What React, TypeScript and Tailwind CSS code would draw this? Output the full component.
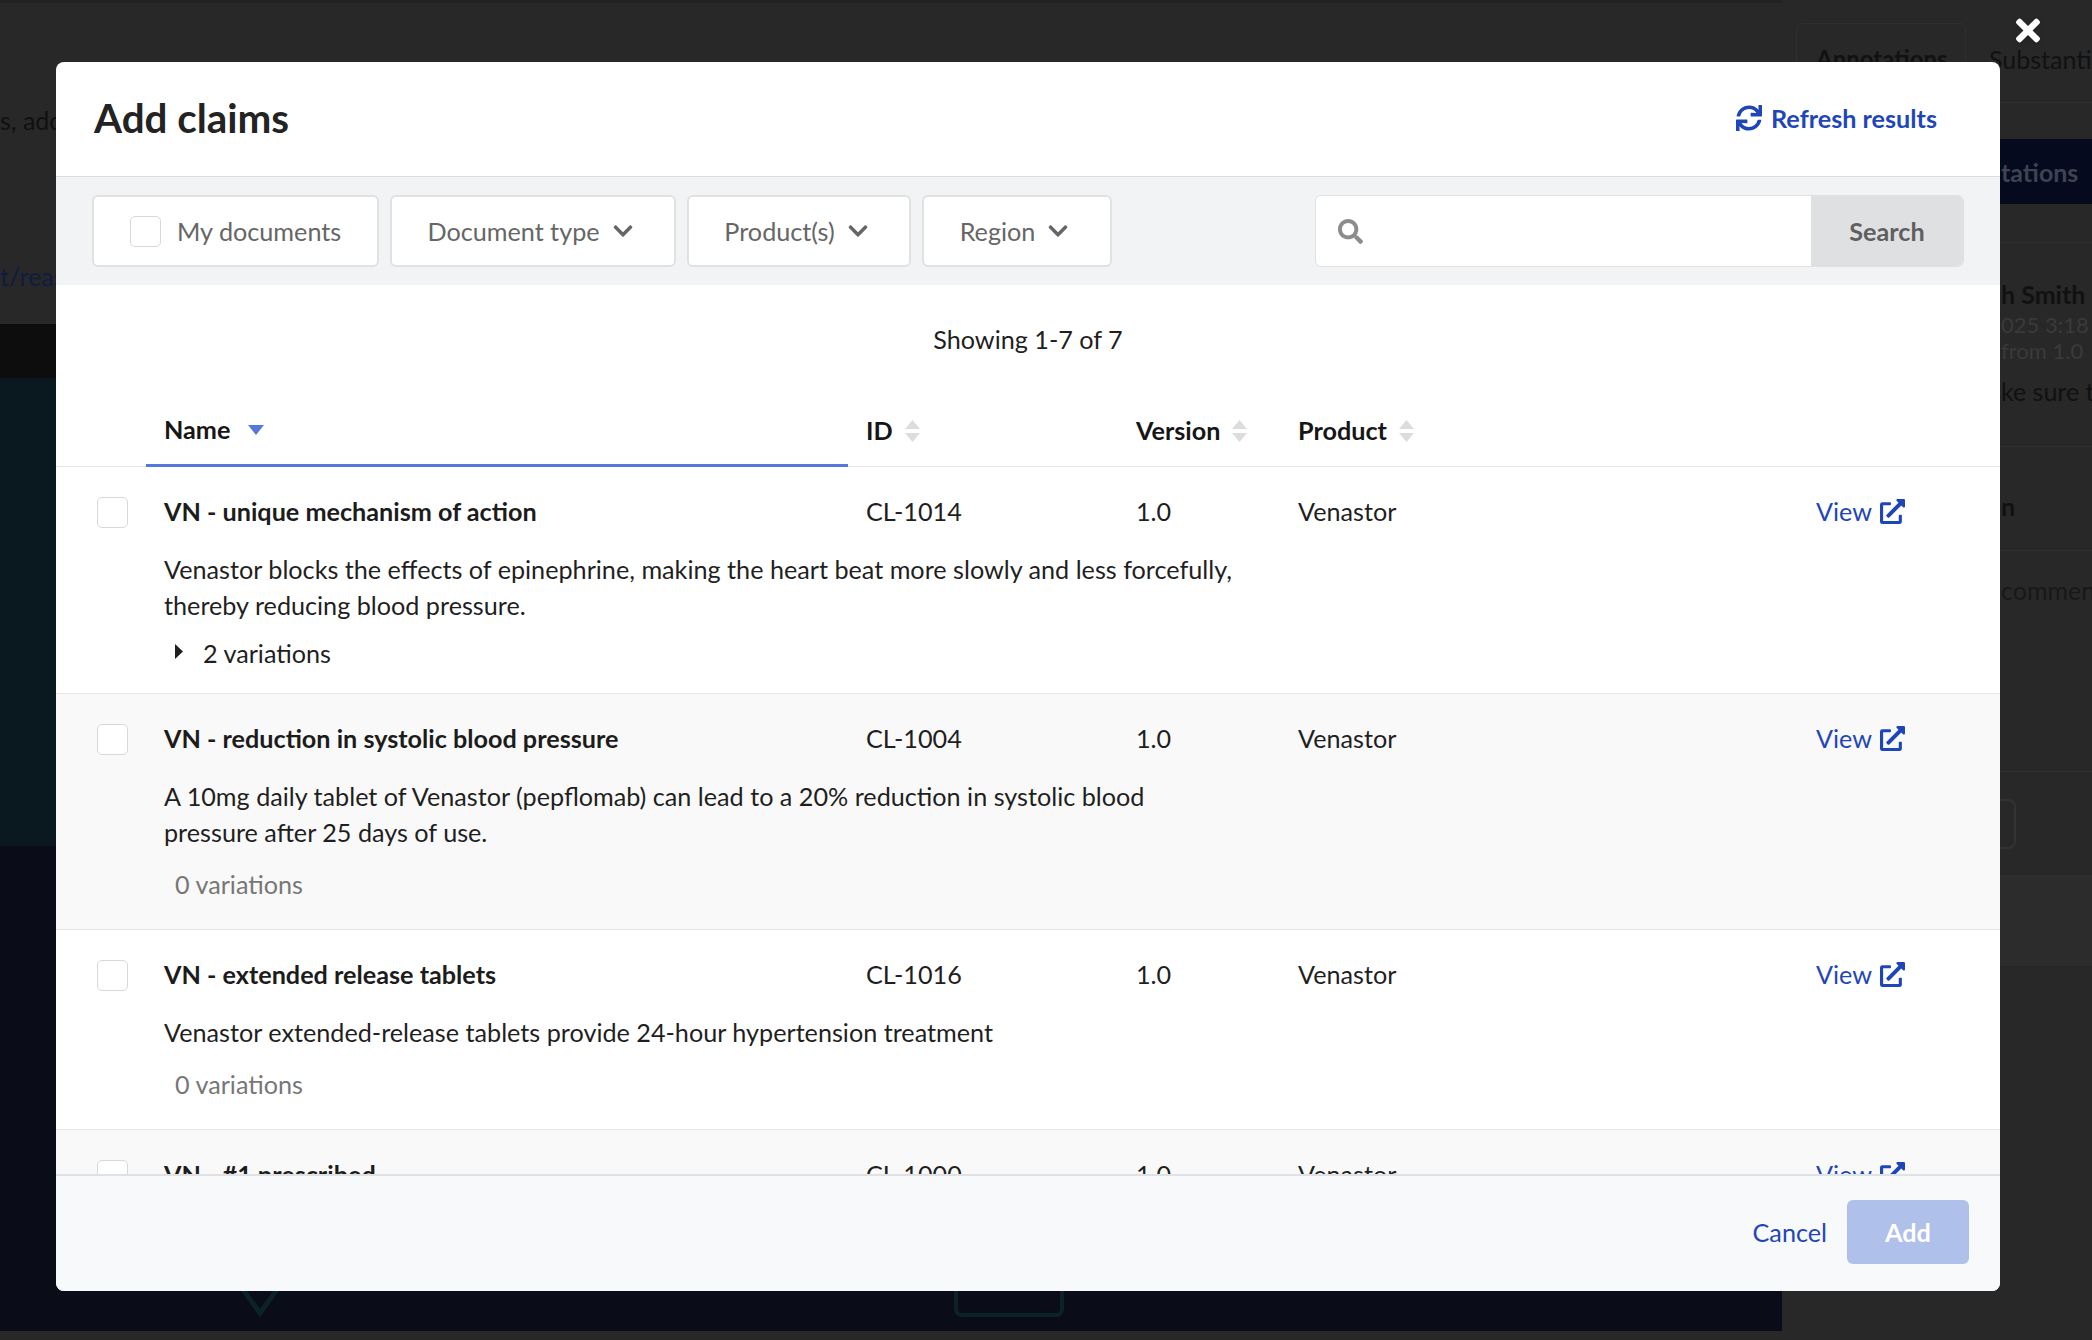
import { FaChevronDown, FaExternalLinkAlt, FaSearch, FaSync, FaTimes } from "react-icons/fa";

const claims = [
  {
    name: "VN - unique mechanism of action",
    id: "CL-1014",
    text: "Venastor blocks the effects of epinephrine, making the heart beat more slowly and less forcefully, thereby reducing blood pressure.",
    variations: 2,
  },
  {
    name: "VN - reduction in systolic blood pressure",
    id: "CL-1004",
    text: "A 10mg daily tablet of Venastor (pepflomab) can lead to a 20% reduction in systolic blood pressure after 25 days of use.",
    variations: 0,
  },
  {
    name: "VN - extended release tablets",
    id: "CL-1016",
    text: "Venastor extended-release tablets provide 24-hour hypertension treatment",
    variations: 0,
  },
  {
    name: "VN - #1 prescribed",
    id: "CL-1000",
    text: "",
    variations: 0,
  },
];

function SortArrows() {
  return (
    <svg width="17" height="24" viewBox="0 0 17 24" className="ml-[11px] mt-[2px] shrink-0">
      <path d="M8.5 1 16 10H1z" fill="#dcdcdc" />
      <path d="M8.5 23 16 14H1z" fill="#dcdcdc" />
    </svg>
  );
}

function FilterButton({ label, className }: { label: string; className: string }) {
  return (
    <button className={`flex h-[72px] items-center justify-center gap-[12px] rounded-md border-2 border-[#e0e1e3] bg-white pr-[5px] text-[#666] ${className}`}>
      {label}
      <FaChevronDown className="h-[22px] w-[22px]" />
    </button>
  );
}

function Checkbox({ className }: { className: string }) {
  return <span className={`block h-[31px] w-[31px] rounded-[5px] border border-[#d8d8d8] bg-white ${className}`} />;
}

function Background() {
  return (
    <div className="flex h-[1340px] w-[2092px] flex-col overflow-hidden bg-[#282828] text-[25px]">
      <div className="flex h-[1331px]">
        <div className="flex w-[1782px] shrink-0 flex-col">
          <div className="h-[324px] border-t-[3px] border-[#222]">
            <div className="mt-[99px] whitespace-nowrap text-[#101010]">s, add</div>
            <div className="mt-[120px] whitespace-nowrap text-[#0e1c40]">t/reas</div>
          </div>
          <div className="h-[54px] bg-[#0d0d0d]" />
          <div className="h-[468px] bg-[#0a1820]" />
          <div className="flex flex-1 items-end gap-[664px] bg-[#0a0c18] pb-[14px] pl-[230px]">
            <svg width="60" height="40" viewBox="0 0 60 40" fill="none" stroke="#0c2229" strokeWidth="5">
              <path d="M4 0 30 36 56 0" />
            </svg>
            <div className="h-[40px] w-[110px] rounded-b-lg border-x-[4px] border-b-[4px] border-[#0c2229]" />
          </div>
        </div>
        <div className="min-w-0 flex-1 overflow-hidden border-l border-[#262626] text-[#111]">
          <div className="flex h-[103px] gap-[23px] border-b border-[#2f2f2f] pl-[13px] pt-[23px] font-bold">
            <div className="h-[80px] w-[170px] shrink-0 rounded-t-md border border-[#2f2f2f] pl-[19px] pt-[17px] text-[24px]">Annotations</div>
            <div className="whitespace-nowrap pt-[18px] font-normal">Substantiation</div>
          </div>
          <div className="mt-[36px] flex h-[65px] items-center whitespace-nowrap bg-[#050a1e] pl-[218px] font-bold text-[#3e4352]">tations</div>
          <div className="h-[39px] border-b border-[#2f2f2f]" />
          <div className="h-[204px] whitespace-nowrap border-b border-[#2f2f2f] pl-[218px] pt-[33px]">
            <div className="font-bold leading-[36px]">h Smith</div>
            <div className="text-[22px] leading-[26px] text-[#3a3a3a]">025 3:18</div>
            <div className="text-[22px] leading-[26px] text-[#3a3a3a]">from 1.0</div>
            <div className="mt-[9px] leading-[36px]">ke sure th</div>
          </div>
          <div className="h-[104px] border-b border-[#2f2f2f] pl-[218px] pt-[41px] font-bold leading-[36px]">n</div>
          <div className="h-[221px] whitespace-nowrap border-b border-[#2f2f2f] pl-[218px] pt-[21px] leading-[36px] text-[#181818]">comment</div>
          <div className="flex h-[104px] items-center border-b border-[#2f2f2f]">
            <div className="ml-[100px] h-[50px] w-[133px] rounded-lg border-2 border-[#333]" />
          </div>
          <div className="h-[91px] border-b border-[#262626] bg-[#2c2c2c]" />
        </div>
      </div>
    </div>
  );
}

export default function App() {
  return (
    <div className="relative h-[1340px] w-[2092px] overflow-hidden font-['Lato',sans-serif] text-[25.2px] leading-[36px] text-[#1f1f1f]">
      <Background />

      <FaTimes className="absolute left-[2016px] top-[13px] h-[35px] w-[24px] text-white drop-shadow-md" />

      <div className="absolute left-[56px] top-[62px] flex h-[1229px] w-[1944px] flex-col overflow-hidden rounded-lg bg-white">
        <div className="flex h-[115px] shrink-0 items-center justify-between border-b border-[#dcdde0] pl-[38px] pr-[63px]">
          <h1 className="mt-[-2px] text-[40.4px] font-bold leading-[48px] text-[#232323]">Add claims</h1>
          <button className="mt-[-2px] flex items-center gap-[9px] font-bold text-[#1f46b8]">
            <FaSync className="h-[26px] w-[26px]" />
            Refresh results
          </button>
        </div>

        <div className="flex h-[108px] shrink-0 items-center justify-between bg-[#f2f3f5] pl-[36px] pr-[36px]">
          <div className="flex gap-[11px]">
            <label className="flex h-[72px] w-[287px] items-center rounded-md border-2 border-[#e0e1e3] bg-white pl-[36px] text-[#666]">
              <Checkbox className="mr-[16px]" />
              My documents
            </label>
            <FilterButton label="Document type" className="w-[286px]" />
            <FilterButton label="Product(s)" className="w-[224px]" />
            <FilterButton label="Region" className="w-[190px]" />
          </div>
          <div className="flex h-[72px] w-[649px] overflow-hidden rounded-md border border-[#dfe0e2] bg-white">
            <div className="flex flex-1 items-center pl-[22px]">
              <FaSearch className="h-[25px] w-[25px] text-[#8c8c8c]" />
            </div>
            <button className="w-[152px] bg-[#dfe0e2] font-bold text-[#5f5f5f]">Search</button>
          </div>
        </div>

        <div className="min-h-0 flex-1 overflow-hidden">
          <div className="pt-[36px] text-center">Showing 1-7 of 7</div>

          <div className="mt-[15px] grid h-[95px] grid-cols-[90px_702px_270px_162px_auto] border-b border-[#e6e6e6] font-bold text-[#161616]">
            <div />
            <div className="h-[95px] border-b-[3px] border-[#5478dd] pl-[18px] pt-[39px]">
              <div className="flex items-center">
                Name
                <svg width="16" height="10" viewBox="0 0 16 10" className="ml-[18px] mt-[2px] shrink-0">
                  <path d="M0 0h16L8 10z" fill="#5478dd" />
                </svg>
              </div>
            </div>
            <div className="flex items-center self-start pl-[18px] pt-[40px]">
              ID
              <SortArrows />
            </div>
            <div className="flex items-center self-start pl-[18px] pt-[40px]">
              Version
              <SortArrows />
            </div>
            <div className="flex items-center self-start pl-[18px] pt-[40px]">
              Product
              <SortArrows />
            </div>
          </div>

          {claims.map((claim, i) => (
            <div
              key={claim.id}
              className={`grid grid-cols-[108px_702px_270px_162px_518px_auto] border-b border-[#e6e6e6] pt-[26px] ${i % 2 === 1 ? "bg-[#f9f9f9]" : "bg-white"} ${claim.variations > 0 ? "pb-[22px]" : "pb-[27px]"}`}
            >
              <Checkbox className="ml-[41px] mt-[4px]" />
              <div className="font-bold text-[#1c1c1c]">{claim.name}</div>
              <div>{claim.id}</div>
              <div>1.0</div>
              <div>Venastor</div>
              <a className="flex items-center gap-[8px] text-[#1f46b8]">
                View
                <FaExternalLinkAlt className="h-[25px] w-[25px]" />
              </a>
              {claim.text && (
                <div className="col-span-4 col-start-2 mt-[22px] max-w-[1075px]">{claim.text}</div>
              )}
              {claim.text && claim.variations > 0 && (
                <div className="col-span-4 col-start-2 mt-[12px] flex items-center pl-[11px]">
                  <svg width="8" height="15" viewBox="0 0 8 15" className="mr-[20px] mt-[-3px]">
                    <path d="M0 0 8 7.5 0 15z" fill="#1f1f1f" />
                  </svg>
                  {claim.variations} variations
                </div>
              )}
              {claim.text && claim.variations === 0 && (
                <div className="col-span-4 col-start-2 mt-[16px] pl-[11px] text-[#777]">0 variations</div>
              )}
            </div>
          ))}
        </div>

        <div className="flex h-[117px] shrink-0 items-center justify-end gap-[20px] border-t-2 border-[#e0e1e3] bg-[#f8f9fb] pb-[3px] pr-[31px]">
          <a className="text-[#1f46b8]">Cancel</a>
          <button className="h-[64px] w-[122px] rounded-md bg-[#afc0ea] font-bold text-white">Add</button>
        </div>
      </div>
    </div>
  );
}
